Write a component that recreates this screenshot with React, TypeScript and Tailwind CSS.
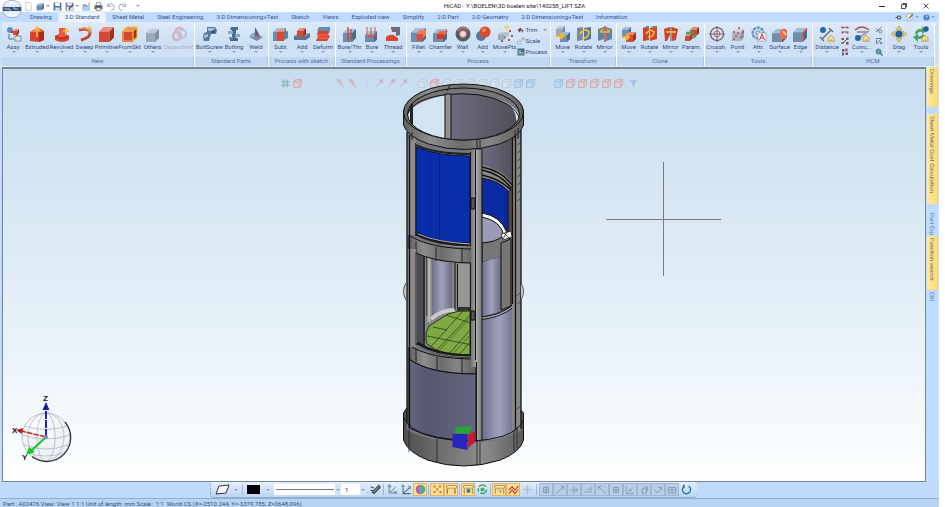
import React from "react";

type IconProps = { name: string; className?: string };

const Cube = ({ x = 2, y = 3, s = 11, f = "#d24a35", t = "#ea8c72", d = "#a2301f" }) => {
  const k = s * 0.3;
  return (
    <g>
      <path d={`M${x} ${y + k}L${x + k} ${y}H${x + s}L${x + s - k} ${y + k}Z`} fill={t} />
      <path d={`M${x} ${y + k}H${x + s - k}V${y + s}H${x}Z`} fill={f} />
      <path d={`M${x + s - k} ${y + k}L${x + s} ${y}V${y + s - k}L${x + s - k} ${y + s}Z`} fill={d} />
    </g>
  );
};
const blue = { f: "#6e8dac", t: "#a3bcd3", d: "#4a6987" };
const grey = { f: "#9ba9bc", t: "#c0cad8", d: "#7f8da3" };
const House = () => <path d="M9 12l3-3 3 3v4h-2v-2h-2v2H9z" fill="#f3dc9a" stroke="#b98c30" strokeWidth=".7" />;

const art: Record<string, React.ReactNode> = {
  assy: <><circle cx="4" cy="4" r="3" fill="#5d8fc0" /><path d="M5 6h6v5" stroke="#c43c32" strokeWidth="2" fill="none" /><Cube x={7} y={3} s={6} /><rect x="9" y="10" width="6" height="5" fill="#dfe4e8" stroke="#69777f" strokeWidth=".7" /><path d="M3 8v5h5" stroke="#526e89" fill="none" /></>,
  extruded: <><path d="M1 6l5-3 4-1 5 3v9l-5 2-9-1z" fill="#d8452c" /><path d="M10 6l5-1v9l-5 2z" fill="#a82b1b" /><path d="M1 6l5-3 9 2-5 1z" fill="#ec8062" /><path d="M8 11V2M5.500 4.500L8 1l2.500 3.500" stroke="#f4b23a" strokeWidth="1.600" fill="none" /></>,
  revolved: <><path d="M1 10q7-5 14 0v4q-7 4-14 0z" fill="#d8452c" /><path d="M5 2h6v9H5z" fill="#e85b3c" /><path d="M1 10q7 5 14 0" stroke="#9b2618" fill="none" /><path d="M12 2v6M9 5h6" stroke="#f3b738" strokeWidth="1.6" /></>,
  sweep: <><path d="M2 4q12-3 11 4-1 4-9 6" stroke="#c9402c" strokeWidth="3" fill="none" /><path d="M2 3q12-3 12 5" stroke="#f49a78" fill="none" /><path d="M12 0v6M9 3h6" stroke="#f0b43c" strokeWidth="1.3" /></>,
  primitive: <Cube x={0} y={1} s={15} />,
  fromskt: <><Cube x={0} y={1} s={15} /><path d="M1 5h10v10H1zM1 5l4-4h10v10l-4 4M11 5l4-4" stroke="#f5b82f" strokeWidth="1.2" fill="none" /></>,
  others: <Cube x={1} y={3} s={13} {...grey} />,
  dependent: <g opacity=".35"><circle cx="6" cy="10" r="4" stroke="#db5761" strokeWidth="2.5" fill="none" /><circle cx="11" cy="8" r="4" stroke="#7e8ca8" strokeWidth="2" fill="none" /><path d="M4 5q3-5 8-2" stroke="#d8453b" strokeWidth="2" fill="none" /></g>,
  bolt: <><path d="M5 1h8l2 3-1 4H9l-2 7H2l-1-4 1-4 3-1z" fill="#58799b" /><path d="M6 2h7l-2 3H6zM2 9l4-1v3l-4 1z" fill="#a5bfd8" /><path d="M9 5l4-1v3H9z" fill="#385673" /></>,
  bolting: <><path d="M5 1h7v3h-2v8h2v3H4v-3h2V4H4z" fill="#466b92" /><path d="M2 5h5v3H2zM9 8h5v3H9z" fill="#88a8c6" /><path d="M3 11h4v2H3z" fill="#6a8aaa" /></>,
  weld: <><path d="M1 11l6-3 8 3-6 4z" fill="#6e90b2" /><path d="M7 1l5 9-5 1z" fill="#3e6791" /><path d="M2 9l5-3v5l-5 1z" fill="#8aa9c6" /><path d="M7 11l4-1" stroke="#e4593b" strokeWidth="2" /></>,
  subt: <><Cube x={0} y={2} s={13} {...blue} /><path d="M4 6h7v9H4z" fill="#d9492f" /><path d="M4 6l2-2h7l-2 2z" fill="#ef896c" /><path d="M11 6l4-1v7l-4 2z" fill="#5e80a2" /></>,
  add: <><path d="M0 10l4-3h12l-4 4z" fill="#8fa9c3" /><path d="M0 10h12v4H0zM12 10l4-3v4l-4 3z" fill="#54759a" /><Cube x={3} y={2} s={9} /></>,
  deform: <><path d="M3 5h12l-2 4 2 1-3 5H1l2-5-1-1z" fill="#d8452f" /><path d="M4 1h11v4l-2 3V5H2z" fill="#668aac" /><path d="M3 9h10M2 12h11" stroke="#f07c5c" /></>,
  bore: <><Cube x={1} y={3} s={13} {...blue} /><path d="M6 1v14M9 3v11" stroke="#d43d2d" strokeWidth="1.2" /></>,
  bore2: <><Cube x={1} y={5} s={12} {...blue} /><path d="M3 1v9M7 1v10M11 1v9" stroke="#bf655b" strokeWidth="1.1" /><path d="M4 10h5" stroke="#e34d36" strokeWidth="2.500" /></>,
  thread: <><path d="M6 1h9v8l-4 1V6H7z" fill="#4e7295" /><path d="M1 11q5-4 9-1l3 2v3H1z" fill="#d9472f" /><path d="M6 2q6 0 7 6" stroke="#c4513f" strokeWidth="1.600" fill="none" /></>,
  fillet: <><Cube x={0} y={2} s={15} {...blue} /><path d="M6 8h6v7H6z" fill="#df4f35" /><path d="M6 8q0-3 4-4h5v5l-3 3V8z" fill="#f27956" /></>,
  chamfer: <><Cube x={0} y={3} s={14} {...blue} /><path d="M4 8l3-3h8l-4 5z" fill="#f06545" /><path d="M4 8h7v5H4z" fill="#cd3d29" /></>,
  wall: <><circle cx="8" cy="8" r="5.5" stroke="#565a63" strokeWidth="4" fill="#f0d5d1" /><path d="M3 5q5-6 10-1" stroke="#a8776f" strokeWidth="2" fill="none" /><circle cx="8" cy="8" r="3.500" stroke="#c36a5d" fill="none" /></>,
  ball: <><circle cx="6" cy="10" r="5" fill="#54799f" /><circle cx="10" cy="6" r="5.500" fill="#d64a30" /><circle cx="9" cy="4" r="2" fill="#ef8c70" /></>,
  movepts: <><path d="M7 0h6l-2 3H8z" fill="#e8d44d" /><Cube x={1} y={6} s={8} {...grey} /><path d="M7 6h5v4H7z" fill="#b6c4d1" /><path d="M12 4h2v2h-2zM14 9h2v2h-2zM11 13h2v2h-2zM4 14h2v2H4z" fill="#d4404c" /></>,
  trim: <><path d="M1 8l6-5 3 4-5 6z" fill="#a9374c" /><path d="M8 6l6 2-4 6z" fill="#54779c" /></>,
  scale: <><path d="M1 8h7v6H1z" fill="#d8dee5" stroke="#7890a6" /><path d="M8 7l5-5M9 2h5v5" stroke="#a58b6b" fill="none" strokeWidth="1.5" /></>,
  process: <><rect x="1" y="1" width="14" height="14" fill="#466780" /><path d="M3 4h5v4h5v5H3z" fill="#8ca7a8" /></>,
  move: <><Cube x={1} y={0} s={9} {...grey} /><Cube x={5} y={6} s={10} {...blue} /><path d="M1 10h7M5 7l4 3-4 3" stroke="#f0b52d" strokeWidth="2" fill="none" /></>,
  rotate: <><path d="M1 2l6-1v13l-6 1z" fill="#758a9f" /><path d="M8 2l7-1v12l-7 2z" fill="#577694" /><path d="M4 8q5-7 9-2-1 7-7 6" stroke="#f3bd36" strokeWidth="1.700" fill="none" /></>,
  mirror: <><path d="M1 3l6-2v12l-6 2zM9 1l6 2v10l-6 2z" fill="#62819f" /><path d="M8 0v16" stroke="#d14a2e" strokeWidth="1.5" /><path d="M3 6h10M3 6l3-3M13 6l-3-3" stroke="#f1b233" strokeWidth="1.5" /></>,
  cmove: <><Cube x={1} y={1} s={9} {...blue} /><Cube x={5} y={6} s={10} /><path d="M1 11h6M5 8l3 3-3 3" stroke="#f0b52d" strokeWidth="2" fill="none" /></>,
  crotate: <><path d="M1 2l6-1v13l-6 1zM8 2l7-1v12l-7 2z" fill="#cd442c" /><path d="M1 2l4-2h2v2zM8 2l3-2h4v1z" fill="#6d7f90" /><path d="M4 8q4-6 8-2-1 6-6 5" stroke="#f5be2f" strokeWidth="1.600" fill="none" /></>,
  cmirror: <><path d="M1 3l6-2v8l-3 6H2zM9 1l6 2-2 11-4 1z" fill="#cd442c" /><path d="M8 1v14" stroke="#47525c" /><path d="M3 6h10" stroke="#f4b92f" strokeWidth="1.8" /></>,
  param: <><Cube x={6} y={1} s={9} /><Cube x={1} y={8} s={7} /><path d="M2 7h5V4M8 12l4-2" stroke="#47a45e" strokeWidth="2.5" fill="none" /></>,
  cross: <><circle cx="8" cy="8" r="6.5" stroke="#744a50" strokeWidth="1.1" fill="none" /><circle cx="8" cy="8" r="3" stroke="#b76d70" fill="none" /><path d="M8 0v16M0 8h16" stroke="#704a50" strokeWidth=".8" /></>,
  point: <><Cube x={2} y={3} s={12} f="#abb6c5" t="#cfd6df" d="#8d9bac" /><path d="M3 6h2M8 2h2M12 6h2M5 10h2M10 11h2M7 7h2M3 13h2" stroke="#c9434d" strokeWidth="1.600" /></>,
  attr: <><circle cx="7" cy="7" r="5.5" fill="#b9d7ef" stroke="#5989b5" strokeWidth="2" strokeDasharray="3 1" /><circle cx="7" cy="7" r="2" fill="#eef6fc" stroke="#658caf" /><rect x="7" y="7" width="8" height="8" fill="#fff" stroke="#aaa" /><path d="M8.500 14l2.500-6 2.500 6M9.500 12h3" stroke="#d4293a" fill="none" /></>,
  surface: <><Cube x={0} y={3} s={14} {...blue} /><path d="M8 5q3-4 7-1v8q-4 0-7 3z" fill="#e86d50" /><path d="M11 5l3 4" stroke="#fbc4a5" strokeWidth="2" /></>,
  edge: <><Cube x={0} y={2} s={14} {...blue} /><path d="M10 7l4-4M10 7v8" stroke="#db5237" strokeWidth="1.5" /></>,
  distance: <><circle cx="4" cy="4" r="3" fill="#28679e" /><path d="M3 13L12 4M1 11l4 4M10 2l4 4" stroke="#65656f" strokeWidth="1.3" /><House /></>,
  coinc: <><path d="M1 4q7-6 14 0" stroke="#b24d4f" strokeWidth="1.600" fill="none" /><path d="M3 6h10L5 12" stroke="#9b9fa8" strokeWidth="2" fill="none" /><circle cx="4" cy="12" r="3" fill="#28679e" /><House /></>,
  con1: <><path d="M4 3h8M3 12h10" stroke="#555" strokeWidth="1.5" /><path d="M1 1h4v4H1zM11 1h4v4h-4zM1 11h4v4H1zM11 11h4v4h-4z" fill="#bf4550" /></>,
  con2: <><path d="M3 13L13 3" stroke="#555" strokeWidth="2" /><path d="M1 2h5v4H1zM10 10h5v5h-5z" fill="#bf3545" /><path d="M10 1h5v5h-5zM1 10h4v4H1z" fill="#4b6f9c" /></>,
  con3: <><path d="M2 2h5v5H2zM9 9h5v5H9z" fill="#bd3545" /><path d="M9 1h4v6H9zM2 9h4v6H2z" fill="#4a6c9a" /></>,
  con4: <><path d="M2 12L13 2M2 5l5 5" stroke="#647384" strokeWidth="2" /><circle cx="11" cy="11" r="3" stroke="#5c6875" fill="none" strokeWidth="1.500" /></>,
  con5: <><path d="M2 3h12M3 14L13 3M3 5v9" stroke="#627c94" strokeWidth="2" fill="none" /><circle cx="12" cy="12" r="2.500" fill="#7c91a9" /></>,
  con6: <><circle cx="7" cy="7" r="5" fill="#6d9bb3" stroke="#477b95" strokeWidth="2" /><path d="M10 10l5 5" stroke="#3a6989" strokeWidth="2.500" /></>,
  drag: <><path d="M8 0l3 4H5zM8 16l3-4H5zM0 8l4-3v6zM16 8l-4-3v6z" fill="#efcb6d" stroke="#b99442" strokeWidth=".7" /><circle cx="8" cy="8" r="3.500" fill="#205f99" /></>,
  tools: <><path d="M2 7q2-5 7-4V0l4 5-4 3V6q-4-1-5 3zM11 9q-1 4-6 4v3l-5-5 5-3v2q3 1 5-2z" fill="#48a363" /><circle cx="13" cy="3" r="2.700" fill="#205f99" /><House /></>,
  doc: <path d="M3 1h7l3 3v11H3z" fill="#fff" stroke="#9ba9bb" />,
  box: <Cube x={1} y={2} s={13} {...blue} />,
  save: <><path d="M1 1h13l1 2v12H1z" fill="#537ab6" /><path d="M4 1h8v6H4z" fill="#fff" /><path d="M4 10h8v5H4z" fill="#dce5f1" /></>,
  saveas: <><path d="M1 1h14v14H1z" fill="#72849c" /><path d="M4 1h8v5H4zM3 9h4v5H3zM9 9h5v5H9z" fill="#e7edf3" /><path d="M7 13l7-8" stroke="#37516f" strokeWidth="2" /></>,
  folder: <><path d="M1 4h6l2 2h5v9H1z" fill="#79a5cf" /><path d="M3 8h12l-2 7H1z" fill="#b2d0eb" /><path d="M10 3l4-2v5" fill="#eb9d5b" /></>,
  print: <><path d="M4 1h8v5H4z" fill="#fff" stroke="#555" /><path d="M1 6h14v7H1z" fill="#5b6068" /><path d="M4 10h8v5H4z" fill="#eee" stroke="#555" /></>,
  undo: <path d="M3 2v6h6M3 8q6-8 11-1 2 6-5 8" stroke="#a9b9cd" strokeWidth="2" fill="none" />,
  redo: <path d="M13 2v6H7M13 8Q7 0 2 7q-2 6 5 8" stroke="#a9b9cd" strokeWidth="2" fill="none" />,
  pin: <path d="M1 8h5M6 4v8M6 5h7v6H6" stroke="#444" strokeWidth="2" fill="#ddd" />,
  note: <><path d="M2 2h10v12H2z" fill="#f7f7f0" stroke="#888" /><path d="M6 11l8-9" stroke="#70813f" strokeWidth="2.500" /></>,
  help: <><circle cx="8" cy="8" r="7" fill="#4278ca" /><path d="M5.500 6q0-2 2.500-2t2.500 2q0 1-2.500 3v1M8 11v2" stroke="#fff" strokeWidth="1.500" fill="none" /></>,
  hash: <path d="M1 5h14M1 11h14M5 1v14M11 1v14" stroke="#3c8a70" strokeWidth="2.500" />,
  rcube: <path d="M1 5h10v10H1zM1 5l4-4h10v10l-4 4M11 5l4-4" stroke="#dc695f" strokeWidth="2" fill="#f0c3bd" />,
  bcube: <path d="M1 5h10v10H1zM1 5l4-4h10v10l-4 4M11 5l4-4" stroke="#6b9fdb" strokeWidth="2" fill="#b4d2f2" />,
  gcube: <path d="M1 5h10v10H1zM1 5l4-4h10v10l-4 4M11 5l4-4" stroke="#9cadbb" strokeWidth="1.500" fill="#edf3f6" />,
  brush: <path d="M2 2l6 7 3-2-5-6zM9 10l5 5" stroke="#ce8a8f" fill="#dc858b" strokeWidth="2.500" />,
  key: <><path d="M2 14l8-8" stroke="#a19ea9" strokeWidth="2" /><circle cx="11" cy="4" r="3" stroke="#c18b91" fill="#c18b91" strokeWidth="2" /></>,
  line: <path d="M7 1h3L6 15" stroke="#aebdc7" strokeWidth="2" fill="none" />,
  funnel: <path d="M1 2h14l-5 6v7l-4-3V8z" fill="#5f97d8" />,
  pen: <path d="M3 12L13 2l2 3L6 14zM1 4l5 2M1 9l4 1" stroke="#33444b" strokeWidth="1.500" fill="#7e8d92" />,
  axes: <><path d="M3 1v12h12M3 13L13 4" stroke="#65798c" strokeWidth="1.300" fill="none" /><path d="M1 1h5v4H1zM10 10h4v5h-4z" fill="#8e9ca9" /></>,
  axes2: <><path d="M3 2v12l10-9M3 14h11" stroke="#4e6b88" strokeWidth="1.500" fill="none" /><path d="M1 4l2-3 2 3M10 3l4 1-1 4" stroke="#4e6b88" fill="none" /></>,
  colors: <><path d="M8 1a7 7 0 0 1 0 14z" fill="#46b95b" /><path d="M1 8a7 7 0 0 1 7-7v14A7 7 0 0 1 1 8" fill="#c75a8c" /><path d="M5 5h7v7H5z" fill="#6697da" /></>,
  dots: <><path d="M2 2h3v3H2zM10 2h3v3h-3zM6 6h3v3H6zM2 10h3v3H2zM11 10h3v3h-3z" fill="#d07b24" /><path d="M2 13L13 2M3 2l9 12" stroke="#d8a055" /></>,
  panel: <><path d="M1 2h14v4H1z" fill="#fff2b3" stroke="#876d42" /><path d="M2 7v7M13 7v7" stroke="#a37c40" strokeWidth="2" fill="none" /></>,
  panel2: <><path d="M1 2h14v4H1z" fill="#fff0a5" stroke="#876d42" /><path d="M2 7v7M14 7v7" stroke="#b69a62" strokeWidth="2" /><circle cx="8" cy="10" r="3" fill="#517d75" /></>,
  panel3: <><path d="M1 2h14v4H1z" fill="#fff0a5" stroke="#876d42" /><path d="M2 7v7M14 7v7" stroke="#b69a62" strokeWidth="2" /><path d="M6 8l4 5M10 8v5" stroke="#92703f" /></>,
  swirl: <><path d="M3 4a6 6 0 0 1 10 0M14 8a6 6 0 0 1-9 5M2 11V6" stroke="#43a45c" strokeWidth="2" fill="none" /><circle cx="8" cy="8" r="3" fill="#52a571" /></>,
  zig: <path d="M1 9l5-5 4 5 5-6M1 14l5-5 4 5 5-6" stroke="#b8421f" strokeWidth="1.700" fill="none" />,
  plus: <><path d="M8 1v14M1 8h14" stroke="#a8bbc8" strokeWidth="1.500" /><circle cx="8" cy="8" r="4" fill="none" stroke="#b3c7d2" /></>,
  refresh: <path d="M5 3a6 6 0 1 0 6 0M5 3L3 1M5 3l-1 3" stroke="#2078a3" strokeWidth="2" fill="none" />,
};

const snapPaths = [
  "M3 8h10M8 2v12M4 4h8v8H4z", "M2 14L14 2M9 2h5v5", "M2 8h12M8 2v12M11 5l3 3-3 3", "M2 11h12M7 7h7V3",
  "M2 2l12 12M2 8V2h6M12 3l2 2", "M3 8h10M8 2v12M4 4h8v8H4z", "M2 2v12h12M4 12l9-8M6 6l6 6", "M5 6h7v7H5zM8 3h6v6",
  "M2 7l5 6 7-10M8 4h5v5", "M2 4h12v9H2zM2 8h12M8 4v9",
];

const Icon = ({ name, className = "size-4" }: IconProps) => (
  <svg viewBox="0 0 16 16" aria-hidden="true" className={`${className} shrink-0`}>{art[name]}</svg>
);

type Tool = { label: string; icon: string; w: string; off?: boolean };
const t = (label: string, icon: string, w: string, off = false): Tool => ({ label, icon, w, off });

const Caret = ({ off = false }) => (
  <span aria-hidden="true" className={`border-x-2 border-t-2 border-x-transparent ${off ? "border-t-transparent" : "border-t-[#8b9fbd]"}`} />
);

const ToolButton = ({ tool }: { tool: Tool }) => (
  <button type="button" disabled={tool.off} className={`flex ${tool.w} shrink-0 flex-col items-center whitespace-nowrap ${tool.off ? "text-[#a9b4c6]" : "text-[#2d4a7c]"}`}>
    <Icon name={tool.icon} />
    <span className="h-[9px] leading-[9px]">{tool.label}</span>
    <span className="flex h-[3px]"><Caret off={tool.off} /></span>
  </button>
);

const Group = ({ title, w, tools, children }: { title: string; w: string; tools: Tool[]; children?: React.ReactNode }) => (
  <section aria-label={title} className={`flex ${w} shrink-0 flex-col border-r border-white bg-linear-to-b from-[#dce9f8] via-[#cbdef4] to-[#d6e6f8]`}>
    <div className="flex flex-1 justify-center pt-[3px]">
      {tools.map((tool, i) => <ToolButton key={i} tool={tool} />)}
      {children}
    </div>
    <h2 className="h-[9px] border-r border-[#a9c5e6] bg-[#c1d8f2] text-center leading-2 text-[#536f9d]">{title}</h2>
  </section>
);

const MiniColumn = ({ icons }: { icons: string[] }) => (
  <div className="flex w-3 shrink-0 flex-col items-center gap-[3px]">
    {icons.map((name) => <button key={name} type="button" aria-label={name}><Icon name={name} className="size-2" /></button>)}
  </div>
);

const tabs = ["Drawing", "3-D Standard", "Sheet Metal", "Steel Engineering", "3-D Dimensioning+Text", "Sketch", "Views", "Exploded view", "Simplify", "2-D Part", "2-D Geometry", "2-D Dimensioning+Text", "Information"];

const Header = () => (
  <header className="relative">
    <div className="flex h-3 items-center bg-white">
      <div className="flex flex-1 items-center gap-[3px] pl-6">
        {["doc", "box", "save", "saveas", "folder", "print", "undo", "redo"].map((name) => (
          <button key={name} type="button" aria-label={name} className="flex items-center gap-px">
            <Icon name={name} className="size-[9px]" />
            {(name === "box" || name === "saveas") && <Caret />}
          </button>
        ))}
        <span className="flex pl-[6px]"><Caret /></span>
      </div>
      <h1 className="pl-[76px] text-[6px] leading-3 text-[#222]">HiCAD - Y:\BOELEN\3D boelen site\140258_LIFT.SZA</h1>
      <div className="flex flex-1 justify-end gap-4 pr-[10px] text-[#222]">
        <button type="button" aria-label="Minimize"><svg viewBox="0 0 6 6" className="size-[6px]"><path d="M0 3.500h6" stroke="currentColor" /></svg></button>
        <button type="button" aria-label="Restore"><svg viewBox="0 0 6 6" className="size-[6px]"><path d="M.5 1.500h4v4h-4zM2 1V.5h3.500V4H5" fill="none" stroke="currentColor" strokeWidth=".8" /></svg></button>
        <button type="button" aria-label="Close"><svg viewBox="0 0 6 6" className="size-[6px]"><path d="M.5.5l5 5M5.500.5l-5 5" stroke="currentColor" strokeWidth=".8" /></svg></button>
      </div>
    </div>
    <nav aria-label="Ribbon tabs" className="flex h-[10px] items-stretch gap-px bg-[#bfdbff] pl-6 text-[#36558b]">
      {tabs.map((tab, i) => (
        <button key={tab} type="button" className={`rounded-t-xs px-[6px] leading-[10px] whitespace-nowrap ${i === 1 ? "bg-[#eaf3fe] outline outline-[#e0ecf8]" : ""}`}>{tab}</button>
      ))}
      <div className="ml-auto flex items-center gap-1 pr-1">
        <button type="button" aria-label="Pin ribbon"><Icon name="pin" className="size-[7px]" /></button>
        <button type="button" aria-label="Notes" className="flex items-center gap-px"><Icon name="note" className="size-2" /><Caret /></button>
        <button type="button" aria-label="Help" className="flex items-center gap-px"><Icon name="help" className="size-[7px]" /><Caret /></button>
      </div>
    </nav>
    <button type="button" aria-label="HiCAD menu" className="absolute top-0 left-[2px] flex h-[18px] w-5 items-center justify-center rounded-full border border-[#9fb4cd] bg-linear-to-b from-[#f8fbfe] via-[#d5dfeb] to-white">
      <svg viewBox="0 0 18 6" className="h-[6px] w-[18px]"><path d="M0 1h18v4H0z" fill="#31547f" /><path d="M2 2v2M4 2v2M6 2v2h2M10 2h2v2M14 2v2" stroke="#dce9f6" strokeWidth=".8" fill="none" /></svg>
    </button>
    <div className="flex h-11 overflow-hidden border-t border-[#dceafa] bg-[#cbdff5] pl-[2px]">
      <Group title="New" w="w-[193px]" tools={[t("Assy.", "assy", "w-[22px]"), t("Extruded", "extruded", "w-[25px]"), t("Revolved", "revolved", "w-6"), t("Sweep", "sweep", "w-[22px]"), t("Primitive", "primitive", "w-[22px]"), t("FromSkt", "fromskt", "w-6"), t("Others", "others", "w-[22px]"), t("Dependent", "dependent", "w-[30px]", true)]} />
      <Group title="Standard Parts" w="w-[74px]" tools={[t("BoltScrew", "bolt", "w-[25px]"), t("Bolting", "bolting", "w-6"), t("Weld", "weld", "w-5")]} />
      <Group title="Process with sketch" w="w-[67px]" tools={[t("Subt.", "subt", "w-[22px]"), t("Add", "add", "w-5"), t("Deform", "deform", "w-[22px]")]} />
      <Group title="Standard Processings" w="w-[71px]" tools={[t("Bore/Thr.", "bore", "w-6"), t("Bore", "bore2", "w-5"), t("Thread", "thread", "w-[22px]")]} />
      <Group title="Process" w="w-36" tools={[t("Fillet", "fillet", "w-5"), t("Chamfer", "chamfer", "w-6"), t("Wall", "wall", "w-5"), t("Add", "ball", "w-5"), t("MovePts", "movepts", "w-6")]}>
        <div className="flex w-[32px] shrink-0 flex-col gap-[3px] text-[#2d4a7c]">
          {[["Trim", "trim"], ["Scale", "scale"], ["Process", "process"]].map(([label, icon]) => (
            <button key={label} type="button" className="flex h-2 items-center gap-px leading-2"><Icon name={icon} className="size-2" />{label}{label === "Trim" && <span className="flex pl-1"><Caret /></span>}</button>
          ))}
        </div>
      </Group>
      <Group title="Transform" w="w-[66px]" tools={[t("Move", "move", "w-5"), t("Rotate", "rotate", "w-[22px]"), t("Mirror", "mirror", "w-5")]} />
      <Group title="Clone" w="w-[88px]" tools={[t("Move", "cmove", "w-5"), t("Rotate", "crotate", "w-[22px]"), t("Mirror", "cmirror", "w-5"), t("Param.", "param", "w-[22px]")]} />
      <Group title="Tools" w="w-[108px]" tools={[t("Crossh.", "cross", "w-[22px]"), t("Point", "point", "w-5"), t("Attr.", "attr", "w-[22px]"), t("Surface", "surface", "w-5"), t("Edge", "edge", "w-[22px]")]} />
      <Group title="HCM" w="w-[122px]" tools={[t("Distance", "distance", "w-6")]}>
        <MiniColumn icons={["con1", "con2", "con3"]} />
        <ToolButton tool={t("Coinc...", "coinc", "w-[22px]")} />
        <MiniColumn icons={["con4", "con5", "con6"]} />
        <div className="mx-px w-px bg-[#eaf3fd]" />
        <ToolButton tool={t("Drag", "drag", "w-[22px]")} />
        <ToolButton tool={t("Tools", "tools", "w-[22px]")} />
      </Group>
    </div>
  </header>
);

const Lift = () => (
  <svg viewBox="400 80 128 392" role="img" aria-label="Panoramic lift model" className="absolute top-[11px] left-[397px] h-[392px] w-32">
    <defs>
      <linearGradient id="metal"><stop stopColor="#626262" /><stop offset=".22" stopColor="#8d8d8d" /><stop offset=".48" stopColor="#6c6c6c" /><stop offset=".72" stopColor="#858585" /><stop offset="1" stopColor="#5f5f5f" /></linearGradient>
      <linearGradient id="base"><stop stopColor="#4e4e4e" /><stop offset=".25" stopColor="#686868" /><stop offset=".65" stopColor="#8e8e8e" /><stop offset="1" stopColor="#5b5b5b" /></linearGradient>
      <linearGradient id="glass"><stop stopColor="#6c6e8b" /><stop offset=".5" stopColor="#a0a2bf" /><stop offset="1" stopColor="#696b85" /></linearGradient>
      <linearGradient id="glassDark"><stop stopColor="#66677e" /><stop offset=".25" stopColor="#575870" /><stop offset="1" stopColor="#64657e" /></linearGradient>
      <linearGradient id="post"><stop stopColor="#77777a" /><stop offset=".5" stopColor="#a7a7a5" /><stop offset="1" stopColor="#77777a" /></linearGradient>
      <linearGradient id="rear"><stop stopColor="#6c6c80" /><stop offset="1" stopColor="#4f4f58" /></linearGradient>
      <clipPath id="opening"><ellipse cx="463.500" cy="114" rx="56" ry="26" /></clipPath>
      <clipPath id="floor"><path d="M426 339q-1-6 3-13l19-12q10-4 22-3v45q-28 0-43-12z" /></clipPath>
    </defs>
    {/* base ring */}
    <path d="M403.500 413l6-9h106l8 9v27q-3 12-23 20-37 12-73 0-20-8-24-20z" fill="url(#base)" stroke="#111" />
    {/* shaft body */}
    <path d="M407 130h114v301q-24 13-58 11-35 0-56-12z" fill="#75757f" />
    {/* right column of the shaft, upper glazing */}
    <path d="M482 148q18-3 33-10v50q-12-17-33-21z" fill="url(#rear)" />
    <path d="M482 165q20 4 31 19v52h-31z" fill="#8a8a86" />
    <path d="M482 167q20 4 30 18M482 170q19 4 29 18M482 175q18 4 29 15" fill="none" stroke="#111" strokeWidth="1.300" />
    <path d="M482 178q17 3 26 13v41q-9-17-26-19z" fill="#0b2aa6" stroke="#101018" />
    <path d="M482 215q19 3 24 19-6 9-24 8z" fill="#9a9bb9" />
    <path d="M482 213q19 3 25 20l4 0-2 5-5-1q-2-16-22-20z" fill="#fff" stroke="#111" />
    <path d="M482 243q14-1 21-7l7 3v13q-11 8-28 10z" fill="#77777a" stroke="#111" />
    {/* lower right glazing */}
    <path d="M482 262l19-5v54l-19 6z" fill="url(#glass)" />
    <path d="M501 243l10-4v67l-10 4z" fill="#777673" stroke="#111" />
    <path d="M482 318q21-3 34-14v128q-15 8-34 9z" fill="url(#glass)" />
    <path d="M472 317q27 1 43-14M472 320q27 0 43-14" fill="none" stroke="#111" /><path d="M475 318.500q25 0 40-14" stroke="#aaa" fill="none" />
    {/* upper left blue panel */}
    <path d="M415 143q22 12 57 11v93q-36 1-57-15z" fill="#a8a8a2" />
    <path d="M416 145q19 9 54 9" stroke="#222" strokeWidth="2" fill="none" />
    <path d="M416 147q22 9 54 9v87q-34 0-54-11z" fill="#092eaa" stroke="#070e40" />
    <path d="M439.500 154v88" stroke="#071f7d" /><path d="M430 153v86" stroke="#0827a0" />
    {/* cabin interior and green floor */}
    <path d="M415 251h56v105q-40 0-56-14z" fill="#85858a" />
    <path d="M417 252h8v95l-8-5z" fill="#494b5a" />
    <path d="M424 253v92M427 254v62" stroke="#111" /><path d="M429 256v66" stroke="#b4b4b0" strokeWidth="3" />
    <path d="M432 259q10 4 20 4v47l-20 7z" fill="url(#glass)" />
    <path d="M431 319q10-9 24-9" fill="none" stroke="#ccc" strokeWidth="4" />
    <path d="M455 263v47M457.500 264v45" stroke="#111" />
    <path d="M458 264h11v43h-11z" fill="#969692" />
    <path d="M457 307h13v5h-13z" fill="#303136" />
    <path d="M426 339q-1-6 3-13l19-12q10-4 22-3v45q-28 0-43-12z" fill="#7fa944" stroke="#273816" />
    <path clipPath="url(#floor)" d="M429 349l34-38M434 353l38-40M447 356l25-28M457 357l15-17M443 314l28 9M427 336l45 9M433 327l14 3" stroke="#284315" strokeWidth=".8" fill="none" />
    <path clipPath="url(#floor)" d="M437 353l36-38M450 357l23-25" stroke="#395a1d" strokeWidth=".7" fill="none" />
    <path d="M417 343q18 13 54 13" stroke="#18191a" strokeWidth="4" fill="none" /><path d="M417 345q18 12 54 12" stroke="#aaa" fill="none" strokeWidth=".7" />
    {/* intermediate ring bands */}
    <path d="M409 235q20 14 67 14v14q-46 0-67-14z" fill="url(#metal)" stroke="#111" />
    <path d="M416 234q21 11 55 11" stroke="#1b1b1b" strokeWidth="3" fill="none" /><path d="M418 234q18 8 52 10" stroke="#ccc" strokeWidth=".8" fill="none" />
    <path d="M416 241v12M436 247v14M462 249v14" stroke="#222" />
    <path d="M409 345q20 14 67 14v15q-46 0-67-15z" fill="url(#metal)" stroke="#111" />
    <path d="M416 349v13M437 357v14M462 359v15" stroke="#222" />
    {/* lower left glazing */}
    <path d="M409 359q20 15 67 15v67q-44-1-67-13z" fill="url(#glassDark)" stroke="#111" />
    {/* posts */}
    <path d="M407 138h9v97h-9zM407 249h9v98h-9z" fill="#8d8a89" /><path d="M407 132v290M409.500 135v293" stroke="#111" strokeWidth="1.300" /><path d="M415.500 143v93M416 252v93" stroke="#2c2c2c" />
    <path d="M512 138h9v292h-9z" fill="#888986" /><path d="M512.500 138v166M515.500 134v296M521 130v299" stroke="#111" strokeWidth="1.300" />
    <path d="M517 145l4-3M517 153l4-3M517 161l4-3M517 169l4-3M517 177l4-3M517 185l4-3M517 193l4-3M517 201l4-3M517 296l4-4M517 304l4-3M517 409l4-3" stroke="#333" strokeWidth=".7" />
    <path d="M471 150h11v291h-6v-74h-5z" fill="url(#post)" /><path d="M470.500 152v94M470.500 263v92M475.500 150v210M482 149v292M476.500 362v79" stroke="#171717" strokeWidth="1" />
    <path d="M471 198h4v11h-4zM471 311h4v9h-4z" fill="#555" stroke="#111" />
    <path d="M511 186v50M509 190v42" stroke="#111" /><path d="M501 234l10-3 1 6-9 3z" fill="#f3f3ed" stroke="#111" strokeWidth=".7" /><path d="M504 233l5 5M507 232l-4 7" stroke="#111" strokeWidth=".7" />
    {/* top ring */}
    <path d="M403.500 110v15q4 12 25 19 36 11 71 0 20-7 24-19v-15z" fill="url(#metal)" stroke="#111" />
    <ellipse cx="463.500" cy="112" rx="60" ry="28" fill="url(#metal)" stroke="#111" />
    <g clipPath="url(#opening)">
      <path d="M406 86h115v56H406z" fill="#777779" />
      <ellipse cx="463.500" cy="120" rx="57" ry="26" fill="#d3e4f1" />
      <path d="M451 94q38-3 59 12 8 7 6 22-14 13-65 14z" fill="url(#rear)" />
      <path d="M406 120q2-20 37-25 38-5 64 9 11 7 13 16" stroke="#111" fill="none" />
      <path d="M445 94h6v46h-6z" fill="#92918e" stroke="#111" />
      <path d="M410 99h3v35h-3z" fill="#222" />
    </g>
    <ellipse cx="463.500" cy="114" rx="56" ry="26" fill="none" stroke="#111" />
    <path d="M477 140v10M480 140v10M515 130v11M518 128v11M412 132v8M450 85l-3 6" stroke="#222" />
    {/* brackets and base joints */}
    <path d="M406 283q-5 8 0 17M521 283q5 8 0 17" fill="#ccc" stroke="#555" />
    <path d="M403.500 417q6 15 34 21 37 7 66-2 16-6 20-16" fill="none" stroke="#111" />
    <path d="M409 429v23M437 439v24M477 441v25M480 441v24M517 427v21M514 430v21" stroke="#222" strokeWidth=".8" />
    <path d="M454 433l3-6 15-1-3 8z" fill="#25a836" /><path d="M452.500 434h15v16l-15-3z" fill="#2825bd" /><path d="M468 435l7-4v11l-7 6z" fill="#c51b2b" />
  </svg>
);

const overlayGroups = [
  { ml: "ml-[278px]", icons: ["hash", "rcube"] },
  { ml: "ml-[34px]", icons: ["brush", "brush"] },
  { ml: "ml-[6px]", icons: ["line", "key", "key", "key"] },
  { ml: "ml-[10px]", icons: ["gcube", "rcube", "gcube", "gcube", "gcube", "gcube", "gcube", "gcube", "bcube", "bcube"] },
  { ml: "ml-[19px]", icons: ["bcube", "rcube", "rcube", "rcube", "rcube", "rcube"] },
  { ml: "ml-[6px]", icons: ["funnel"] },
];

const Viewport = () => (
  <main className="relative min-w-0 flex-1 overflow-hidden border border-t-2 border-[#788490] bg-linear-to-b from-[#c7ddee] via-[#e0edf6] via-50% to-[#fdfeff]">
    <div className="flex pt-[10px] opacity-40">
      {overlayGroups.map((g, i) => (
        <div key={i} className={`flex gap-[3px] ${g.ml}`}>
          {g.icons.map((name, j) => <button key={j} type="button" aria-label={name}><Icon name={name} className="size-[9px]" /></button>)}
        </div>
      ))}
    </div>
    <Lift />
    <svg viewBox="0 0 115 114" aria-hidden="true" className="absolute top-[93px] left-[603px] h-[114px] w-[115px]"><path d="M0 57.500h115M57.500 0v114" stroke="#857a78" /></svg>
    <svg viewBox="0 0 70 76" role="img" aria-label="Coordinate axes" className="absolute top-[323px] left-[5px] h-[76px] w-[70px]">
      <defs><radialGradient id="globe" cx=".35" cy=".3"><stop stopColor="#fff" /><stop offset="1" stopColor="#eef1f5" /></radialGradient></defs>
      <circle cx="38" cy="45" r="24" fill="url(#globe)" stroke="#b8c4d0" />
      <g fill="none" stroke="#a3adb9" strokeWidth=".7"><ellipse cx="38" cy="45" rx="9" ry="24" /><ellipse cx="38" cy="45" rx="18" ry="24" /><path d="M17 34q21 7 42 0M14 43q24 8 48 0M16 53q22 8 44 0M21 61q17 6 34 0" /></g>
      <path d="M57 30A24 24 0 0 1 24 64.500" fill="none" stroke="#333" strokeWidth="1.200" />
      <path d="M38 45V17" stroke="#2024b5" strokeWidth="2" strokeDasharray="8 1" /><path d="M38 10l-3.500 8h7z" fill="#1719ae" />
      <path d="M38 45L13 39" stroke="#bd2632" strokeWidth="1.500" strokeDasharray="6 1" /><path d="M8 38l7-2-1 6z" fill="#be1821" />
      <path d="M38 45L23 59" stroke="#16c52b" strokeWidth="2" /><path d="M18 63l3-8 6 5z" fill="#10cb25" /><circle cx="38" cy="45" r="2" fill="#718fba" />
      <g fontFamily="Liberation Sans, sans-serif" fontSize="8" fontWeight="700" fill="#111"><text x="35" y="9">Z</text><text x="4" y="41">X</text><text x="14" y="68">Y</text></g>
    </svg>
  </main>
);

const sideTabs = [
  { label: "Drawings", h: "h-10", yellow: true },
  { label: "Sheet Metal Cost Calculation", h: "h-[90px]", yellow: true },
  { label: "Part Exp", h: "h-[25px]", yellow: false },
  { label: "Function search", h: "h-[54px]", yellow: true },
  { label: "Ctrl", h: "h-4", yellow: false },
];

const SidePanel = () => (
  <aside className="flex w-[13px] shrink-0 flex-col bg-[#bfdbff] pl-px text-[#6b6b55]">
    {sideTabs.map((s, i) => (
      <button key={s.label} type="button" className={`flex ${s.h} w-[11px] items-center justify-start pt-[2px] text-[6px] leading-[11px] whitespace-nowrap [writing-mode:vertical-rl] ${i < 2 ? "mb-[7px]" : ""} ${s.yellow ? "bg-linear-to-r from-[#ffeaa0] to-[#ffd96b]" : "text-[#587caf]"}`}>{s.label}</button>
    ))}
  </aside>
);

const BarButton = ({ name, on = false }: { name: string; on?: boolean }) => (
  <button type="button" aria-label={name} className={`flex h-[13px] w-[14px] items-center justify-center ${on ? "border border-[#dfb468] bg-[#ffdf9c]" : ""}`}><Icon name={name} className="size-[11px]" /></button>
);
const Divider = () => <span className="mx-px h-[11px] w-px bg-[#9fb9da]" />;

const Footer = () => (
  <footer>
    <div className="flex h-4 items-stretch bg-[#c0dafc]">
      <div className="ml-[210px] flex items-center rounded-sm border-b border-[#8daed8] bg-linear-to-b from-[#e4effc] to-[#bcd5f2] pr-1">
        <span className="mr-1 h-[11px] border-l border-dotted border-[#7594bd]" />
        <button type="button" aria-label="Line shape" className="flex items-center gap-1"><svg viewBox="0 0 15 11" className="h-[11px] w-[15px]"><path d="M4 2l10-1-3 8-10 1z" fill="#f8fbfe" stroke="#333" /></svg><Caret /></button>
        <span className="mx-1 h-[11px] w-px bg-[#9fb9da]" />
        <button type="button" aria-label="Colour" className="flex items-center gap-[6px]"><span className="h-[9px] w-[13px] bg-black" /><Caret /></button>
        <button type="button" aria-label="Line style" className="ml-1 flex h-[11px] items-center bg-white pl-[2px]"><svg viewBox="0 0 58 3" className="h-[3px] w-[58px]"><path d="M0 1.500h58" stroke="#777" /></svg><span className="ml-px flex h-full items-center bg-[#d4e4f7] px-px"><Caret /></span></button>
        <span className="flex h-[11px] items-center bg-white"><select aria-label="Line width" defaultValue="1" className="w-[19px] appearance-none pl-1 text-[6px] leading-[11px] text-[#333]"><option>1</option></select><span className="flex h-full items-center bg-[#d4e4f7] px-px"><Caret /></span></span>
        <span className="w-[2px]" /><BarButton name="pen" /><Divider /><BarButton name="axes" /><BarButton name="axes2" /><BarButton name="colors" on /><Divider />
        <BarButton name="dots" on /><BarButton name="panel" on /><Divider /><BarButton name="panel2" on /><BarButton name="swirl" /><Divider />
        <BarButton name="panel3" on /><BarButton name="zig" on /><BarButton name="plus" /><span className="w-px" /><Divider /><span className="w-px" />
        {snapPaths.map((d, i) => (
          <button key={i} type="button" disabled aria-label={`Snap ${i + 1}`} className="flex h-[13px] w-[14px] items-center justify-center border border-[#9fb6d2] bg-[#b9cfe9]"><svg viewBox="0 0 16 16" className="size-[10px]"><path d={d} fill="none" stroke="#8499b3" strokeWidth="1.500" /></svg></button>
        ))}
        <BarButton name="refresh" />
      </div>
    </div>
    <p className="h-[9px] border-t border-[#8faed4] bg-[#b8d3f4] pl-[3px] leading-[9px] whitespace-pre text-[#304f80]">Part : A02476 View: View 1 1:1 Unit of length: mm Scale : 1:1  World CS (X=-2510.244, Y=-3379.785, Z=3648.096)</p>
  </footer>
);

export default function App() {
  return (
    <div className="flex h-screen flex-col overflow-hidden bg-white pr-[6px] font-['Roboto','Liberation_Sans',sans-serif] text-[6px]">
      <Header />
      <div className="flex min-h-0 flex-1 border-t border-[#dceafa] bg-[#bfdbff] pl-[2px]">
        <Viewport />
        <SidePanel />
      </div>
      <Footer />
    </div>
  );
}
